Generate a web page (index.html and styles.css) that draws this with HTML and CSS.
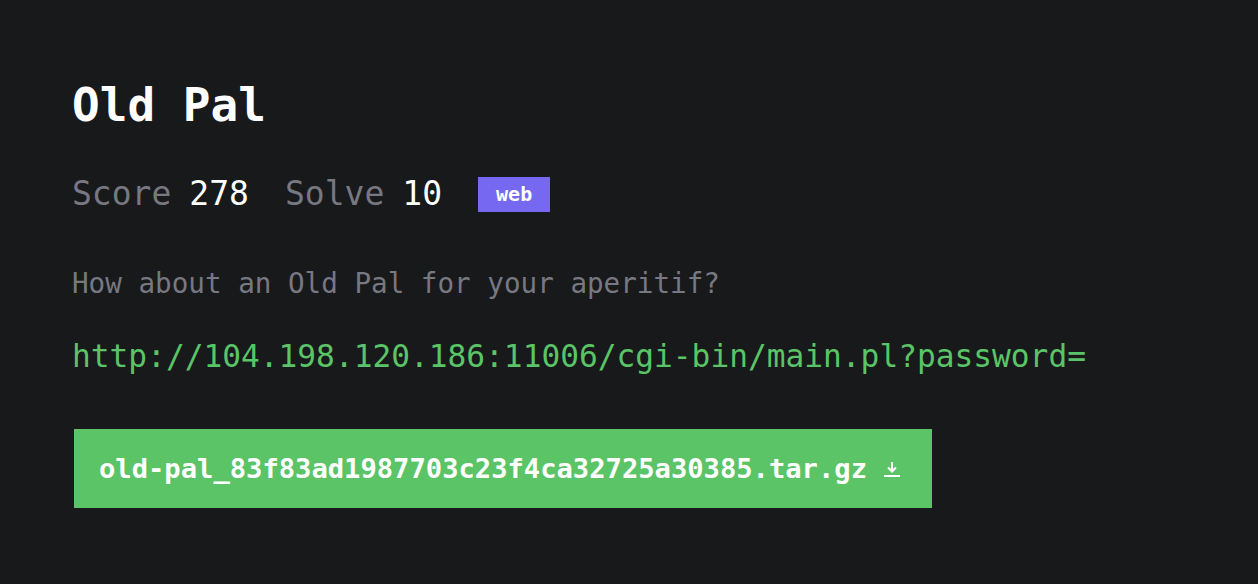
FILE: index.html
```html
<!DOCTYPE html>
<html>
<head>
    <meta charset="UTF-8">
    <title>Old Pal</title>
    <link rel="stylesheet" href="styles.css">
</head>
<body>
    <div class="challenge">
        <h1 class="title">Old Pal</h1>
        <div class="stats">
            <span class="label">Score</span> <span class="value">278</span>
            <span class="label solve">Solve</span> <span class="value">10</span>
            <span class="tag">web</span>
        </div>
        <p class="desc">How about an Old Pal for your aperitif?</p>
        <p class="link">http://104.198.120.186:11006/cgi-bin/main.pl?password=</p>
        <a class="download" href="#">
            old-pal_83f83ad1987703c23f4ca32725a30385.tar.gz
            <svg class="icon" width="18" height="18" viewBox="0 0 18 18">
                <path d="M9 2 V11 M5 7.5 L9 11.5 L13 7.5 M1 16 H17" stroke="#fff" stroke-width="2" fill="none"/>
            </svg>
        </a>
    </div>
</body>
</html>
```

FILE: styles.css
```css
body {
    background-color: #18191b;
    margin: 0;
    font-family: "DejaVu Sans Mono", "Liberation Mono", monospace;
}
.challenge {
    padding: 72px 72px 0 72px;
}
.title {
    color: #FFFFFF;
    font-size: 46px;
    font-weight: bold;
    margin: 0;
    line-height: 66px;
}
.stats {
    display: flex;
    align-items: center;
    margin-top: 36px;
    font-size: 33px;
    line-height: 40px;
}
.label {
    color: #777881;
    margin-right: 18px;
}
.value {
    color: #FFFFFF;
}
.solve {
    margin-left: 36px;
}
.tag {
    background-color: #7668f0;
    color: #FFFFFF;
    font-size: 20px;
    font-weight: bold;
    line-height: 35px;
    padding: 0 18px;
    margin-left: 36px;
}
.desc {
    color: #777881;
    font-size: 27.6px;
    margin: 50px 0 0 0;
    line-height: 40px;
}
.link {
    color: #5ac467;
    font-size: 31.2px;
    margin: 32px 0 0 0;
    line-height: 40px;
}
.download {
    display: inline-flex;
    align-items: center;
    gap: 16px;
    margin-top: 53px;
    margin-left: 2px;
    background-color: #5bc467;
    color: #FFFFFF;
    font-size: 27.15px;
    font-weight: bold;
    text-decoration: none;
    height: 79px;
    padding: 0 31px 0 25px;
}
```
